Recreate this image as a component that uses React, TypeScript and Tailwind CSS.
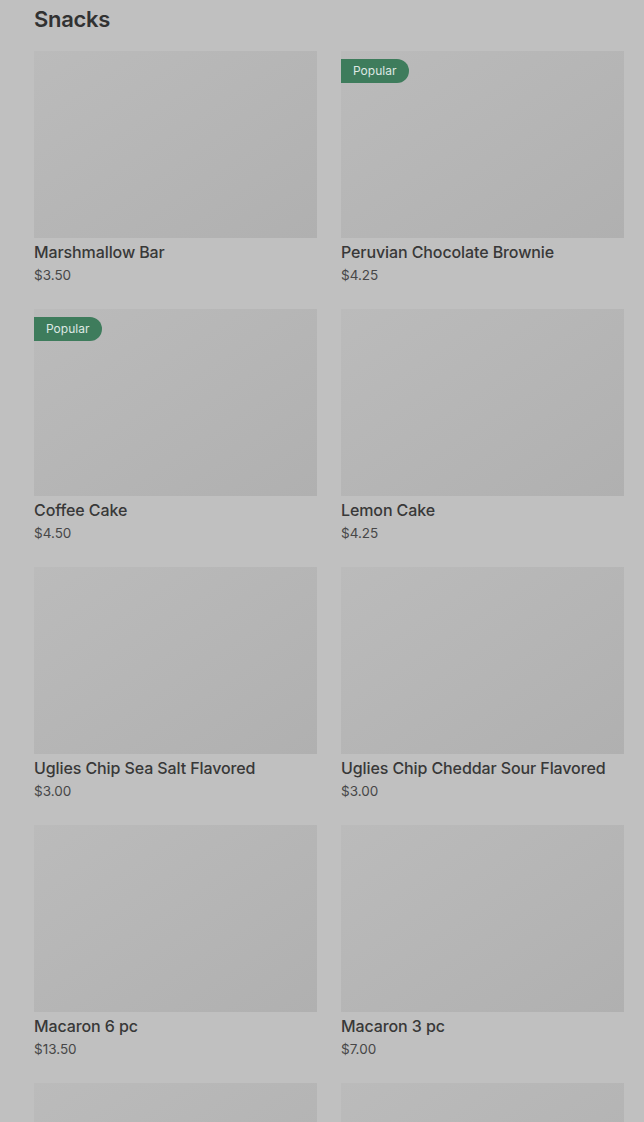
type Snack = {
  name: string;
  price: string;
  popular?: boolean;
};

const snacks: Snack[] = [
  { name: "Marshmallow Bar", price: "$3.50" },
  { name: "Peruvian Chocolate Brownie", price: "$4.25", popular: true },
  { name: "Coffee Cake", price: "$4.50", popular: true },
  { name: "Lemon Cake", price: "$4.25" },
  { name: "Uglies Chip Sea Salt Flavored", price: "$3.00" },
  { name: "Uglies Chip Cheddar Sour Flavored", price: "$3.00" },
  { name: "Macaron 6 pc", price: "$13.50" },
  { name: "Macaron 3 pc", price: "$7.00" },
  { name: "Chocolate Chip Cookie", price: "$3.25" },
  { name: "Almond Croissant", price: "$4.75" },
];

function SnackCard({ snack }: { snack: Snack }) {
  return (
    <div className="flex flex-col">
      <div className="relative h-[187px] bg-gradient-to-br from-[#bbbbbb] to-[#b0b0b0]">
        {snack.popular && (
          <span className="absolute left-0 top-2 rounded-r-full bg-[#3e7c5c] pl-3 pr-[13px] text-[12px] leading-6 text-[#dfe8e3]">
            Popular
          </span>
        )}
      </div>
      <div className="mt-[2px] text-[16px] leading-6 font-medium tracking-[-0.1px] text-[#383838]">
        {snack.name}
      </div>
      <div className="mt-px text-[13.5px] leading-5 text-[#474747]">
        {snack.price}
      </div>
    </div>
  );
}

export default function App() {
  return (
    <div
      className="h-[1122px] overflow-hidden bg-[#c0c0c0] pl-[34px] pr-[20px]"
      style={{ fontFamily: "Inter, 'Liberation Sans', sans-serif" }}
    >
      <h2 className="text-[22px] leading-[38px] font-semibold tracking-[-0.3px] text-[#323232]">
        Snacks
      </h2>
      <div className="mt-[13px] grid grid-cols-2 gap-x-6 gap-y-6">
        {snacks.map((snack) => (
          <SnackCard key={snack.name} snack={snack} />
        ))}
      </div>
    </div>
  );
}
